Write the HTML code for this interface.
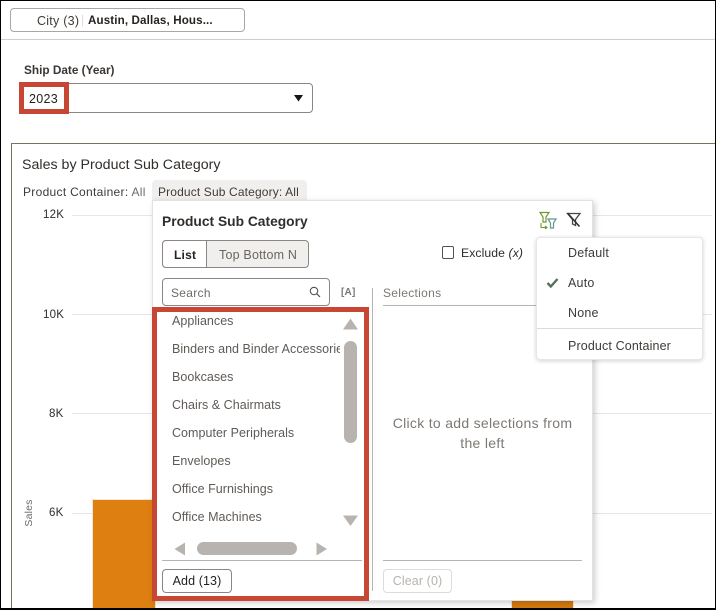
<!DOCTYPE html>
<html><head><meta charset="utf-8">
<style>
html,body{margin:0;padding:0;background:#fff}
#p{position:relative;width:716px;height:610px;overflow:hidden;background:#fff;font-family:"Liberation Sans",sans-serif;font-size:12.5px;color:#312d2a;box-sizing:border-box}
#p div{position:absolute;box-sizing:border-box;white-space:nowrap}
.l{height:1px}
.t{line-height:16px;height:16px}
.g{background:#e6e6e8;height:1px}
.i{color:#5f5a56;letter-spacing:.03px}
.k{font-size:11.5px;color:#2f2b28;letter-spacing:.2px}
</style></head><body>
<div id="p">
<!-- top -->
<div style="left:10px;top:8px;width:235px;height:24px;border:1px solid #aaa6a2;border-radius:4px"></div>
<div class="t" style="left:37px;top:13px;color:#3f3b38;letter-spacing:.25px">City (3)</div>
<div style="left:82px;top:15px;width:1px;height:11px;background:#e0dedc"></div>
<div class="t" style="left:88px;top:13px;font-weight:bold;font-size:11.6px;letter-spacing:.13px;color:#26221f">Austin, Dallas, Hous...</div>
<div class="l" style="left:1px;top:39px;width:715px;background:#d0cecc"></div>

<div class="t" style="left:24px;top:62px;font-size:11.8px;letter-spacing:0;font-weight:bold;color:#3a3633">Ship Date (Year)</div>
<div style="left:22px;top:83px;width:291px;height:30px;border:1px solid #8b8682;border-radius:4px"></div>
<div class="t" style="left:29px;top:91px;letter-spacing:.3px;color:#221f1c">2023</div>
<svg style="position:absolute;left:294px;top:95px" width="10" height="7"><path d="M0 0H9L4.5 6.500Z" fill="#161513"/></svg>
<div style="left:19px;top:82px;width:50px;height:32px;border:5px solid #c74634"></div>

<!-- chart card -->
<div style="left:11px;top:143px;width:710px;height:480px;border:1px solid #6b7a5c"></div>
<div class="t" style="left:22px;top:157px;font-size:14.2px;letter-spacing:.02px;color:#312d2a">Sales by Product Sub Category</div>
<div class="t" style="left:23px;top:184px;font-size:12px;letter-spacing:.3px;color:#3f3b38">Product Container: <span style="color:#6f6b67">All</span></div>
<div style="left:152px;top:180px;width:155px;height:24px;background:#f1efed;border-radius:4px 4px 0 0"></div>
<div class="t" style="left:158px;top:184px;font-size:12px;letter-spacing:.14px;color:#3f3b38">Product Sub Category: All</div>

<div class="t k" style="left:43px;top:207px">12K</div>
<div class="t k" style="left:43px;top:307px">10K</div>
<div class="t k" style="left:49px;top:406px">8K</div>
<div class="t k" style="left:49px;top:505px">6K</div>
<div class="g" style="left:72px;top:215px;width:640px"></div>
<div class="g" style="left:72px;top:314px;width:640px"></div>
<div class="g" style="left:72px;top:413px;width:640px"></div>
<div class="g" style="left:72px;top:513px;width:640px"></div>
<div class="t" style="left:15px;top:505px;width:28px;text-align:center;font-size:10.500px;color:#6f6b67;transform:rotate(-90deg);letter-spacing:.2px">Sales</div>
<div style="left:92px;top:499px;width:64px;height:111px;background:#de7f11;border:1px solid #f6e4cf;border-bottom:0"></div>
<div style="left:511px;top:600px;width:63px;height:10px;background:#d47a10;border-left:1px solid #f6e4cf;border-right:1px solid #f6e4cf"></div>

<!-- popup -->
<div style="left:152px;top:200px;width:441px;height:401px;background:#fff;border:1px solid #e4e2e0;box-shadow:2px 2px 6px rgba(0,0,0,.2)"></div>
<div class="t" style="left:162px;top:214px;font-size:13.8px;font-weight:bold;letter-spacing:0;color:#312d2a">Product Sub Category</div>

<svg style="position:absolute;left:538px;top:211px" width="20" height="20" fill="none">
<path d="M2 1.500H11L8 6V11H5V6Z" stroke="#6f9a2e" stroke-width="1.200"/>
<path d="M10 8H18L15.500 12V17H12.500V12Z" stroke="#5c9a8c" stroke-width="1.200"/>
<path d="M3 12V16.500H9M7 15L9 16.500L7 18" stroke="#6f9a2e" stroke-width="1.100"/>
</svg>
<svg style="position:absolute;left:566px;top:212px" width="16" height="16" fill="none">
<path d="M1.500 1.500H14L9.500 7.500V13.500L6.500 12V7.500Z" stroke="#4a4643" stroke-width="1.300"/>
<path d="M1.500 1L13.500 14.500" stroke="#312d2a" stroke-width="1.500"/>
</svg>

<div style="left:162px;top:240px;width:147px;height:28px;border:1px solid #8b8682;border-radius:4px;background:#f1efed"></div>
<div style="left:162px;top:240px;width:45px;height:28px;border:1px solid #8b8682;border-radius:4px 0 0 4px;background:#fff"></div>
<div class="t" style="left:174px;top:247px;font-size:12px;font-weight:bold;color:#26221f;letter-spacing:.2px">List</div>
<div class="t" style="left:219px;top:247px;letter-spacing:.2px;color:#6a655f">Top Bottom N</div>

<div style="left:442px;top:246px;width:12px;height:13px;border:1px solid #55504c;border-radius:2px"></div>
<div class="t" style="left:461px;top:245px;font-size:12.2px;letter-spacing:.1px;color:#312d2a">Exclude <i>(x)</i></div>

<div style="left:162px;top:278px;width:168px;height:28px;border:1px solid #8b8682;border-radius:4px"></div>
<div class="t" style="left:171px;top:285px;font-size:12px;letter-spacing:.3px;color:#6f6b67">Search</div>
<svg style="position:absolute;left:309px;top:286px" width="12" height="12" fill="none"><circle cx="5" cy="5" r="3.700" stroke="#55504c" stroke-width="1.100"/><path d="M7.800 7.800L11 11" stroke="#55504c" stroke-width="1.200"/></svg>
<div class="t" style="left:341px;top:285px;font-size:10px;font-weight:bold;color:#7d7873;letter-spacing:.2px">[A]</div>

<div class="i t" style="left:172px;top:313px">Appliances</div>
<div style="left:172px;top:341px;width:168px;height:16px;overflow:hidden"><span class="i" style="line-height:16px">Binders and Binder Accessories</span></div>
<div class="i t" style="left:172px;top:369px">Bookcases</div>
<div class="i t" style="left:172px;top:397px">Chairs &amp; Chairmats</div>
<div class="i t" style="left:172px;top:425px">Computer Peripherals</div>
<div class="i t" style="left:172px;top:453px">Envelopes</div>
<div class="i t" style="left:172px;top:481px">Office Furnishings</div>
<div class="i t" style="left:172px;top:509px">Office Machines</div>

<svg style="position:absolute;left:340px;top:315px" width="22" height="16"><path d="M3 14.500L10.500 3.500L18 14.500Z" fill="#b8b3ae"/></svg>
<div style="left:344px;top:341px;width:13px;height:102px;border-radius:7px;background:#b8b3ae"></div>
<svg style="position:absolute;left:340px;top:512px" width="22" height="16"><path d="M3 3.500H18L10.500 14Z" fill="#b8b3ae"/></svg>
<svg style="position:absolute;left:172px;top:541px" width="16" height="16"><path d="M13 1.500V14.500L2.500 8Z" fill="#b8b3ae"/></svg>
<div style="left:197px;top:542px;width:100px;height:13px;border-radius:7px;background:#b8b3ae"></div>
<svg style="position:absolute;left:314px;top:541px" width="16" height="16"><path d="M2.500 1.500V14.500L13 8Z" fill="#b8b3ae"/></svg>
<div class="l" style="left:162px;top:560px;width:200px;background:#b8b3ae"></div>
<div style="left:162px;top:569px;width:70px;height:24px;border:1px solid #8b8682;border-radius:4px;background:#fff"></div>
<div class="t" style="left:162px;top:573px;width:70px;text-align:center;letter-spacing:.1px;color:#26221f">Add (13)</div>

<div style="left:152px;top:307px;width:217px;height:294px;border:5px solid #c74634"></div>

<div style="left:372px;top:288px;width:1px;height:303px;background:#b8b3ae"></div>
<div class="t" style="left:383px;top:285px;font-size:12px;letter-spacing:.3px;color:#7d7873">Selections</div>
<div class="l" style="left:383px;top:305px;width:199px;background:#b8b3ae"></div>
<div style="left:383px;top:413px;width:199px;text-align:center;white-space:normal;font-size:14px;line-height:20px;color:#7d7873;letter-spacing:.3px">Click to add selections from<br>the left</div>
<div class="l" style="left:383px;top:560px;width:199px;background:#b8b3ae"></div>
<div style="left:383px;top:569px;width:69px;height:24px;border:1px solid #dedcda;border-radius:4px"></div>
<div class="t" style="left:383px;top:573px;width:69px;text-align:center;letter-spacing:.1px;color:#b8b3ae">Clear (0)</div>

<!-- menu -->
<div style="left:536px;top:237px;width:167px;height:123px;background:#fff;border:1px solid #e8e6e4;border-radius:4px;box-shadow:0 1px 4px rgba(0,0,0,.18)"></div>
<div class="t" style="left:568px;top:245px;letter-spacing:.2px;color:#3f3b38">Default</div>
<svg style="position:absolute;left:546px;top:277px" width="13" height="12"><path d="M1.500 6L4.800 9.500L11.500 2" fill="none" stroke="#56705e" stroke-width="2.400"/></svg>
<div class="t" style="left:568px;top:275px;letter-spacing:.2px;color:#3f3b38">Auto</div>
<div class="t" style="left:568px;top:305px;letter-spacing:.2px;color:#3f3b38">None</div>
<div class="l" style="left:537px;top:328px;width:165px;background:#dedcda"></div>
<div class="t" style="left:568px;top:338px;letter-spacing:.13px;color:#3f3b38">Product Container</div>

<!-- outer frame -->
<div style="left:0;top:0;width:716px;height:610px;border:1px solid #000;border-bottom-width:2px"></div>
</div>
</body></html>
